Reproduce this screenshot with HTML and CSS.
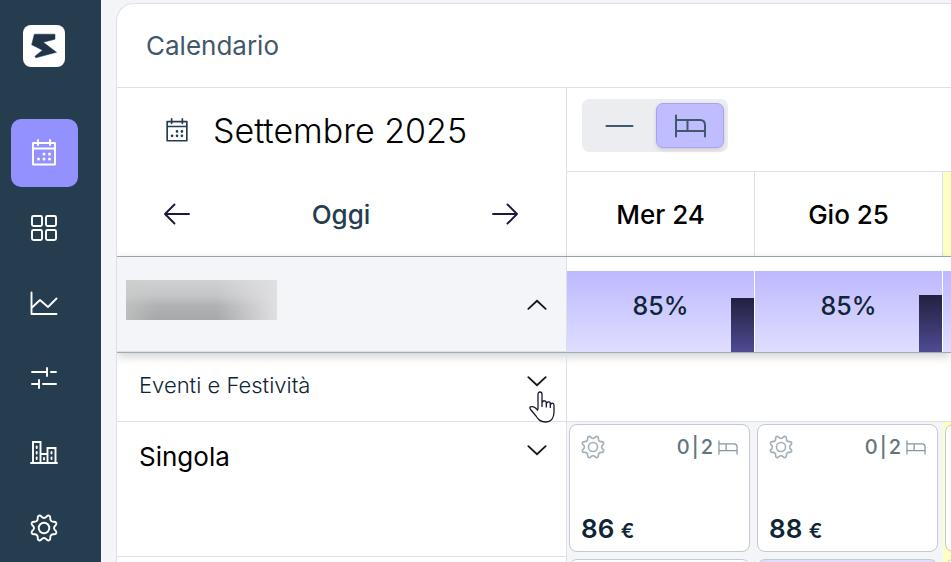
FILE: index.html
```html
<!DOCTYPE html>
<html lang="it">
<head>
<meta charset="utf-8">
<meta name="viewport" content="width=device-width, initial-scale=1">
<title>Calendario</title>
<link rel="stylesheet" href="styles.css">
</head>
<body>
<svg class="defs" aria-hidden="true">
  <symbol id="calendar" viewBox="0 0 26 28">
    <path d="M2 4h22v21.500H2zM2 9.500h22M7 1v5M19 1v5" fill="none" stroke="currentColor" stroke-width="1.900" stroke-linejoin="round" stroke-linecap="round"/>
    <path d="M13 15h.01M18.500 15h.01M7.500 20h.01M13 20h.01M18.500 20h.01" stroke="currentColor" stroke-width="3" stroke-linecap="round"/>
  </symbol>
  <symbol id="gear" viewBox="-14 -14 28 28">
    <path d="M10 0C10 2.800 13.360 2.500 12.290 5.090C11.220 7.680 9.050 5.090 7.070 7.070C5.090 9.050 7.680 11.220 5.090 12.290C2.500 13.360 2.800 10 0 10C-2.800 10 -2.500 13.360 -5.090 12.290C-7.680 11.220 -5.090 9.050 -7.070 7.070C-9.050 5.090 -11.220 7.680 -12.290 5.090C-13.360 2.500 -10 2.800 -10 0C-10 -2.800 -13.360 -2.500 -12.290 -5.090C-11.220 -7.680 -9.050 -5.090 -7.070 -7.070C-5.090 -9.050 -7.680 -11.220 -5.090 -12.290C-2.500 -13.360 -2.800 -10 0 -10C2.800 -10 2.500 -13.360 5.090 -12.290C7.680 -11.220 5.090 -9.050 7.070 -7.070C9.050 -5.090 11.220 -7.680 12.290 -5.090C13.360 -2.500 10 -2.800 10 0Z" fill="none" stroke="currentColor" stroke-width="1.900"/>
    <circle r="5.300" fill="none" stroke="currentColor" stroke-width="1.900"/>
  </symbol>
  <symbol id="bed" viewBox="0 0 32 24">
    <path d="M1.500 1.500v21M1.500 6h24q5 0 5 5v11.500M1.500 17h29M13 6v11" fill="none" stroke="currentColor" stroke-width="2" stroke-linecap="round"/>
  </symbol>
  <symbol id="chevron" viewBox="0 0 20 12">
    <path d="M2 2l8 7.500L18 2" fill="none" stroke="currentColor" stroke-width="1.700" stroke-linecap="round"/>
  </symbol>
  <symbol id="arrow" viewBox="0 0 28 22">
    <path d="M26 11H2M11.500 1.500L2 11l9.500 9.500" fill="none" stroke="currentColor" stroke-width="1.900" stroke-linecap="round" stroke-linejoin="round"/>
  </symbol>
</svg>

<div class="app">
  <nav class="sidebar">
    <a class="logo" href="#" aria-label="Home">
      <svg viewBox="0 0 42 42"><path d="M11.300 9.200H32V14.200L20.300 17.300L33.500 27.300L12.800 32.800L11.900 31.300L19.500 25.200L8.700 19.700Z" fill="#1f3547" stroke="#1f3547" stroke-width=".5" stroke-linejoin="round"/></svg>
    </a>
    <a class="nav-item active" href="#" aria-label="Calendario"><svg><use href="#calendar"/></svg></a>
    <a class="nav-item" href="#" aria-label="Pannello">
      <svg viewBox="0 0 28 28" fill="none" stroke="currentColor" stroke-width="1.900"><rect x="2" y="2" width="10" height="10" rx="1.500"/><rect x="16" y="2" width="10" height="10" rx="1.500"/><rect x="2" y="16" width="10" height="10" rx="1.500"/><rect x="16" y="16" width="10" height="10" rx="1.500"/></svg>
    </a>
    <a class="nav-item" href="#" aria-label="Statistiche">
      <svg viewBox="0 0 28 28" fill="none" stroke="currentColor" stroke-width="1.900" stroke-linecap="round" stroke-linejoin="round"><path d="M1.500 3.500V25H26.500M2 18.500L10 11L18 18L26.500 9.500"/></svg>
    </a>
    <a class="nav-item" href="#" aria-label="Regole">
      <svg viewBox="0 0 28 28" fill="none" stroke="currentColor" stroke-width="1.900" stroke-linecap="round"><path d="M2 8H17M17 4V12M21 8H26M2 20H9M9 16V24M13 20H26"/></svg>
    </a>
    <a class="nav-item" href="#" aria-label="Strutture">
      <svg viewBox="0 0 28 28" fill="none" stroke="currentColor" stroke-width="1.900" stroke-linecap="round"><path d="M1 24H27M3 24V3H10.500V24M10.500 15H17.500M17.500 24V9H25.500V24"/><path d="M6.700 7.500v1.500M6.700 13v1.500M6.700 18.500v1.500M14 19v1.500M21.500 13v1.500M21.500 18.500v1.500"/></svg>
    </a>
    <a class="nav-item" href="#" aria-label="Impostazioni"><svg><use href="#gear"/></svg></a>
  </nav>

  <main class="panel">
    <header class="panel-header"><h1>Calendario</h1></header>

    <section class="row head">
      <div class="side">
        <div class="month"><svg class="month-icon"><use href="#calendar"/></svg><h2>Settembre 2025</h2></div>
        <div class="pager">
          <button type="button" aria-label="Indietro"><svg class="arrow"><use href="#arrow"/></svg></button>
          <button type="button" class="today">Oggi</button>
          <button type="button" aria-label="Avanti"><svg class="arrow flip-x"><use href="#arrow"/></svg></button>
        </div>
      </div>
      <div class="timeline">
        <div class="toolbar">
          <div class="toggle">
            <button type="button" aria-label="Compatta"><svg viewBox="0 0 32 24"><path d="M3 12H29" stroke="currentColor" stroke-width="2.200" stroke-linecap="round"/></svg></button>
            <button type="button" class="on" aria-label="Camere"><svg><use href="#bed"/></svg></button>
          </div>
        </div>
        <div class="days dates">
          <div class="day">Mer 24</div><div class="day">Gio 25</div><div class="day weekend"></div>
        </div>
      </div>
    </section>

    <section class="row occupancy">
      <div class="side">
        <div class="redacted"></div>
        <button type="button" aria-label="Comprimi"><svg class="chevron flip-y"><use href="#chevron"/></svg></button>
      </div>
      <div class="days">
        <div class="rate"><span>85%</span><i class="bar low"></i></div>
        <div class="rate"><span>85%</span><i class="bar"></i></div>
        <div class="rate"></div>
      </div>
    </section>

    <section class="row events">
      <div class="side">
        <h3>Eventi e Festività</h3>
        <button type="button" aria-label="Espandi eventi"><svg class="chevron"><use href="#chevron"/></svg></button>
        <svg class="pointer" viewBox="0 0 26 32"><path d="M9 18.500V3.500Q9 1 11 1T13 3.500V12Q13.500 9.500 15.500 9.800T17.300 12V14Q17.500 10.700 19.500 10.900T21.300 13V15Q21.600 12 23.300 12.200T25 14.500V21C25 27 22 31 16.500 31C11 31 9 28 7 25L2 19Q-.3 16 2 15.700Q4.500 15.500 6.500 17L9 19.500M13 12v4M17.300 13v3.500M21.300 14v3" fill="#fff" stroke="#1b1830" stroke-width="1.300" stroke-linejoin="round"/></svg>
      </div>
      <div></div>
    </section>

    <section class="row room">
      <div class="side">
        <h3>Singola</h3>
        <button type="button" aria-label="Espandi Singola"><svg class="chevron"><use href="#chevron"/></svg></button>
      </div>
      <div class="days">
        <div class="slot"><article class="card">
          <div class="card-top"><svg class="cog"><use href="#gear"/></svg><div class="count"><span>0</span><span>|</span><span>2</span></div><svg class="bed"><use href="#bed"/></svg></div>
          <p class="price">86 <small>€</small></p>
        </article></div>
        <div class="slot"><article class="card">
          <div class="card-top"><svg class="cog"><use href="#gear"/></svg><div class="count"><span>0</span><span>|</span><span>2</span></div><svg class="bed"><use href="#bed"/></svg></div>
          <p class="price">88 <small>€</small></p>
        </article></div>
        <div class="slot weekend"><article class="card"></article></div>
      </div>
    </section>

    <section class="row room">
      <div class="side"></div>
      <div class="days">
        <div class="slot"><article class="card"></article></div>
        <div class="slot"><article class="card booked"></article></div>
        <div class="slot weekend"><article class="card"></article></div>
      </div>
    </section>
  </main>
</div>
</body>
</html>
```
FILE: styles.css
```css
* { box-sizing: border-box; }
body { margin: 0; font-family: Inter, "Liberation Sans", sans-serif; color: #0f2536; background: #f4f5f8; }
h1, h2, h3, p { margin: 0; font-weight: 400; }
button { border: 0; padding: 0; background: none; font: inherit; color: inherit; display: flex; align-items: center; justify-content: center; }
svg { display: block; }
.defs { position: absolute; width: 0; height: 0; }

.app { display: flex; height: 100vh; overflow: hidden; }
.sidebar { flex: 0 0 101px; background: #263c4f; padding: 25px 11px 0; display: flex; flex-direction: column; color: #fff; }
.logo { width: 42px; height: 42px; margin: 0 12px 52px; background: #fff; border-radius: 8px; }
.nav-item { flex: none; width: 67px; height: 68px; margin-bottom: 7px; padding-right: 1px; border-radius: 10px; display: flex; align-items: center; justify-content: center; color: #fff; }
.nav-item.active { background: #9391ff; }
.nav-item svg { width: 28px; height: 28px; }

.panel { flex: 1; min-width: 0; margin: 3px 0 0 15px; height: 800px; background: #fff; border: 1px solid #dde1e5; border-right: 0; border-radius: 18px 0 0 0; overflow: hidden; }
.panel-header { height: 84px; padding: 0 29px; display: flex; align-items: center; border-bottom: 1px solid #dde1e5; }
.panel-header h1 { font-size: 26px; color: #3f586b; }

.row { display: grid; grid-template-columns: 450px minmax(0, 1fr); }
.side { border-right: 1px solid #dde1e5; }
.days { display: grid; grid-template-columns: repeat(3, 188px); overflow: hidden; }

.head { height: 169px; border-bottom: 1px solid #9eabb6; }
.month { height: 84px; padding-left: 47px; display: flex; align-items: center; gap: 23px; }
.month h2 { font-size: 34px; color: #000; font-weight: 300; }
.month-icon { width: 26px; height: 25px; color: #263c4f; }
.pager { height: 84px; padding: 0 47px 0 46px; display: flex; align-items: center; justify-content: space-between; color: #1b1839; }
.arrow { width: 28px; height: 22px; }
.flip-x { transform: scaleX(-1); }
.flip-y { transform: scaleY(-1); }
.today { font-size: 26px; font-weight: 500; color: #263c4f; }
.toolbar { height: 84px; padding: 11px 15px; border-bottom: 1px solid #dde1e5; }
.toggle { width: 146px; height: 53px; padding: 4px; background: #ecedf0; border-radius: 7px; display: flex; gap: 4px; color: #3f586b; }
.toggle button { flex: 1; border-radius: 7px; }
.toggle .on { background: #bfbcff; border: 1px solid #a5a2fa; box-shadow: 0 2px 4px #0002; }
.toggle svg { width: 33px; height: 24px; }
.day { height: 84px; border-right: 1px solid #dde1e5; display: flex; align-items: center; justify-content: center; font-size: 26px; font-weight: 500; color: #000; }
.weekend { background: #ffffc4; }

.occupancy { height: 96px; border-bottom: 1px solid #9eabb6; box-shadow: 0 3px 10px #0003; position: relative; }
.occupancy .side { background: #f4f5f8; border-bottom: 1px solid #dde1e5; padding: 0 18px 0 9px; display: flex; align-items: center; justify-content: space-between; }
.redacted { width: 151px; height: 40px; margin-bottom: 8px; background: linear-gradient(90deg, #ccc8 0%, #ccc0 20%, #ddd0 60%, #e0e0e2 100%), linear-gradient(#d0d1d2, #c4c5c6 40%, #b0b1b2 65%, #a7a8a9); }
.chevron { width: 22px; height: 13px; color: #161618; }
.occupancy .days { padding-top: 14px; }
.rate { position: relative; border-right: 1px solid #fff; background: linear-gradient(#bdb9ff, #dfdeff); font-size: 25px; font-weight: 500; line-height: 70px; text-align: center; }
.bar { position: absolute; right: 0; bottom: 0; width: 23px; height: 57px; background: linear-gradient(#22203f, #4e4b93); }
.bar.low { height: 54px; }

.events { height: 69px; border-bottom: 1px solid #dde1e5; }
.events .side { position: relative; padding: 0 18px 4px 22px; display: flex; align-items: center; justify-content: space-between; }
.events h3 { font-size: 22px; font-weight: 300; }
.events .chevron { margin-bottom: 8px; }
.pointer { position: absolute; left: 412px; top: 38px; width: 26px; height: 32px; }

.room { height: 135px; }
.room .side { border-bottom: 1px solid #dde1e5; padding: 19px 18px 0 22px; display: flex; justify-content: space-between; align-items: flex-start; }
.room h3 { font-size: 26px; color: #000; }
.room .chevron { margin-top: 3px; }
.room .days { background: #f4f5f8; }
.slot { padding: 2px 5px 5px 2px; }
.card { height: 128px; padding: 10px 11px 4px; background: #fff; border: 1px solid #c4cad0; border-radius: 8px; display: flex; flex-direction: column; justify-content: space-between; }
.booked { background: #dfdeff; }
.card-top { display: flex; align-items: center; font-size: 20px; font-weight: 500; color: #64747f; }
.count { margin-left: auto; margin-right: 5px; display: flex; gap: 2px; }
.cog { width: 24px; height: 24px; color: #a3afb9; }
.bed { width: 20px; height: 15px; color: #8696a2; }
.price { font-size: 26px; font-weight: 600; line-height: 32px; }
.price small { font-size: 20px; }
```
